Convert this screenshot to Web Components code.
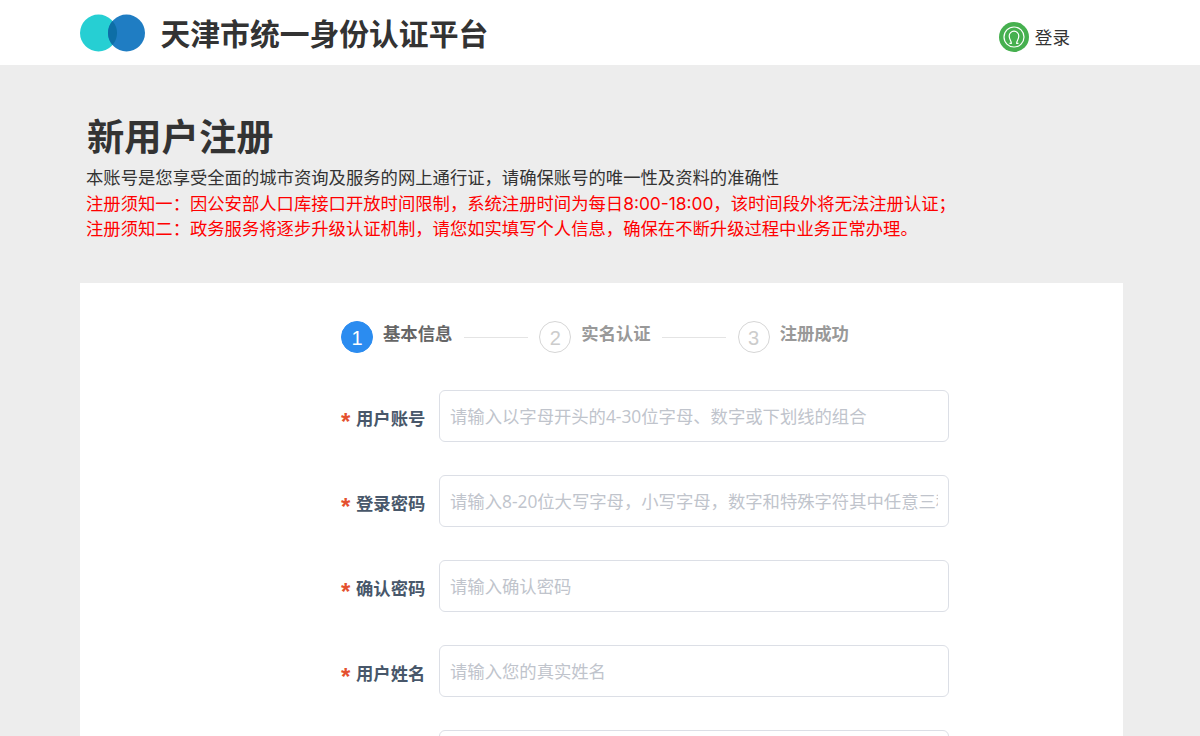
<!DOCTYPE html>
<html lang="zh-CN">
<head>
<meta charset="utf-8">
<title>新用户注册</title>
<style>
    html, body { margin: 0; height: 736px; overflow: hidden; }
    body {
        background-color: #ededed;
        font-family: "Liberation Sans", "Noto Sans CJK SC", sans-serif;
    }
</style>
</head>
<body>
<site-header></site-header>
<page-intro>
    <span slot="title">新用户注册</span>
    <span>本账号是您享受全面的城市资询及服务的网上通行证，请确保账号的唯一性及资料的准确性</span>
    <span slot="notice">注册须知一：因公安部人口库接口开放时间限制，系统注册时间为每日8:00-18:00，该时间段外将无法注册认证；</span>
    <span slot="notice">注册须知二：政务服务将逐步升级认证机制，请您如实填写个人信息，确保在不断升级过程中业务正常办理。</span>
</page-intro>
<reg-card>
    <reg-steps>
        <step-item num="1" active>基本信息</step-item>
        <step-item num="2">实名认证</step-item>
        <step-item num="3">注册成功</step-item>
    </reg-steps>
    <form-row label="用户账号" hint="请输入以字母开头的4-30位字母、数字或下划线的组合"></form-row>
    <form-row label="登录密码" hint="请输入8-20位大写字母，小写字母，数字和特殊字符其中任意三种的组合"></form-row>
    <form-row label="确认密码" hint="请输入确认密码"></form-row>
    <form-row label="用户姓名" hint="请输入您的真实姓名"></form-row>
    <form-row></form-row>
</reg-card>

<script>
class SiteHeader extends HTMLElement {
    constructor() {
        super();
        const root = this.attachShadow({ mode: 'open' });
        root.innerHTML = `
            <style>
                :host {
                    display: flex;
                    align-items: center;
                    height: 65px;
                    background-color: #fff;
                    padding-left: 80px;
                    box-sizing: border-box;
                }
                .logo { width: 66px; height: 38px; flex: none; }
                .name {
                    margin-left: 14.5px;
                    margin-bottom: 2px;
                    font-size: 29.8px;
                    font-weight: 700;
                    color: #333;
                    white-space: nowrap;
                }
                .login {
                    display: flex;
                    align-items: center;
                    margin-left: auto;
                    margin-right: 130px;
                    margin-top: 9px;
                    gap: 6px;
                    font-size: 17.6px;
                    color: #333;
                }
                .login svg { width: 30px; height: 30px; }
                .login span { margin-bottom: 2px; }
            </style>
            <svg class="logo" viewBox="0 0 66 38">
                <circle cx="18.5" cy="19" r="18.5" fill="#26cfd3"/>
                <circle cx="46.5" cy="19" r="18.5" fill="#1f7dc3"/>
                <path d="M32.5 6.9A18.5 18.5 0 0 1 32.5 31.1A18.5 18.5 0 0 1 32.5 6.9Z" fill="#0d6ea6"/>
            </svg>
            <div class="name">天津市统一身份认证平台</div>
            <div class="login">
                <svg viewBox="0 0 30 30">
                    <circle cx="15" cy="15" r="15" fill="#46b04f"/>
                    <circle cx="15" cy="15" r="10" fill="none" stroke="#fff" stroke-width="1.2"/>
                    <path d="M10.5 21.3h1.8c.3-2-2.1-3.7-2.1-7.3a4.8 4.8 0 0 1 9.6 0c0 3.6-2.4 5.3-2.1 7.3h1.8" fill="none" stroke="#fff" stroke-width="1.2"/>
                </svg>
                <span>登录</span>
            </div>
        `;
    }
}

class PageIntro extends HTMLElement {
    constructor() {
        super();
        const root = this.attachShadow({ mode: 'open' });
        root.innerHTML = `
            <style>
                :host {
                    display: block;
                    height: 218px;
                    padding: 50px 0 0 86px;
                    box-sizing: border-box;
                    font-family: Inter, "Noto Sans CJK SC", sans-serif;
                    font-size: 17.33px;
                    line-height: 25.5px;
                    color: #333;
                    white-space: nowrap;
                }
                .title {
                    font-family: "Liberation Sans", "Noto Sans CJK SC", sans-serif;
                    font-size: 37.3px;
                    line-height: 46px;
                    height: 50px;
                    font-weight: 700;
                    color: #333;
                    margin-left: 1px;
                }
                .line { display: block; }
                .notice { color: #f00; }
                ::slotted([slot="notice"]) { display: block; }
            </style>
            <div class="title"><slot name="title"></slot></div>
            <div class="line"><slot></slot></div>
            <div class="notice"><slot name="notice"></slot></div>
        `;
    }
}

class RegCard extends HTMLElement {
    constructor() {
        super();
        const root = this.attachShadow({ mode: 'open' });
        root.innerHTML = `
            <style>
                :host {
                    display: block;
                    width: 1043px;
                    margin-left: 80px;
                    padding: 38px 0 0 261px;
                    box-sizing: border-box;
                    height: 600px;
                    background-color: #fff;
                }
            </style>
            <slot></slot>
        `;
    }
}

class RegSteps extends HTMLElement {
    constructor() {
        super();
        const root = this.attachShadow({ mode: 'open' });
        root.innerHTML = `
            <style>
                :host {
                    display: flex;
                    align-items: center;
                    height: 32px;
                    margin-bottom: 37px;
                }
            </style>
            <slot></slot>
        `;
    }
}

class StepItem extends HTMLElement {
    constructor() {
        super();
        const root = this.attachShadow({ mode: 'open' });
        root.innerHTML = `
            <style>
                :host {
                    display: flex;
                    align-items: center;
                    font-size: 17.33px;
                    font-weight: 700;
                    color: #999;
                    white-space: nowrap;
                }
                :host([active]) { color: #666; }
                .num {
                    width: 32px;
                    height: 32px;
                    padding-top: 2px;
                    border-radius: 50%;
                    border: 1px solid #d6d6d6;
                    box-sizing: border-box;
                    display: flex;
                    align-items: center;
                    justify-content: center;
                    font-size: 20px;
                    font-weight: 400;
                    color: #ccc;
                }
                :host([active]) .num {
                    background-color: #2b8cf0;
                    border-color: #2b8cf0;
                    color: #fff;
                }
                .text { margin-left: 10px; margin-bottom: 10px; }
                .line {
                    width: 64px;
                    height: 1px;
                    margin: 0 11.5px 0 11.5px;
                    background-color: #e4e4e4;
                }
                :host(:last-child) .line { display: none; }
            </style>
            <div class="num"></div>
            <div class="text"><slot></slot></div>
            <div class="line"></div>
        `;
        root.querySelector('.num').textContent = this.getAttribute('num');
    }
}

class FormRow extends HTMLElement {
    constructor() {
        super();
        const root = this.attachShadow({ mode: 'open' });
        root.innerHTML = `
            <style>
                :host {
                    display: flex;
                    align-items: center;
                    width: 608px;
                    height: 52px;
                    margin-bottom: 33px;
                }
                .star {
                    width: 15px;
                    flex: none;
                    color: #e4502f;
                    font-size: 24px;
                    font-weight: 700;
                    line-height: 24px;
                    padding-top: 11px;
                }
                .label {
                    width: 83px;
                    flex: none;
                    padding-top: 2px;
                    font-size: 17.33px;
                    font-weight: 700;
                    color: #48576a;
                    white-space: nowrap;
                }
                .input {
                    flex: 1;
                    min-width: 0;
                    height: 52px;
                    box-sizing: border-box;
                    padding: 0 10px;
                    border: 1px solid #dcdfe6;
                    border-radius: 6px;
                    background-color: #fff;
                }
                .hint {
                    font-family: "Open Sans", "Noto Sans CJK SC", sans-serif;
                    font-size: 17.33px;
                    line-height: 50px;
                    height: 50px;
                    color: #c0c4cc;
                    white-space: nowrap;
                    overflow: hidden;
                }
            </style>
            <div class="star"></div>
            <div class="label"></div>
            <div class="input"><div class="hint"></div></div>
        `;
        const label = this.getAttribute('label');
        if (label) {
            root.querySelector('.star').textContent = '*';
            root.querySelector('.label').textContent = label;
        }
        root.querySelector('.hint').textContent = this.getAttribute('hint') || '';
    }
}

customElements.define('site-header', SiteHeader);
customElements.define('page-intro', PageIntro);
customElements.define('reg-card', RegCard);
customElements.define('reg-steps', RegSteps);
customElements.define('step-item', StepItem);
customElements.define('form-row', FormRow);
</script>
</body>
</html>
